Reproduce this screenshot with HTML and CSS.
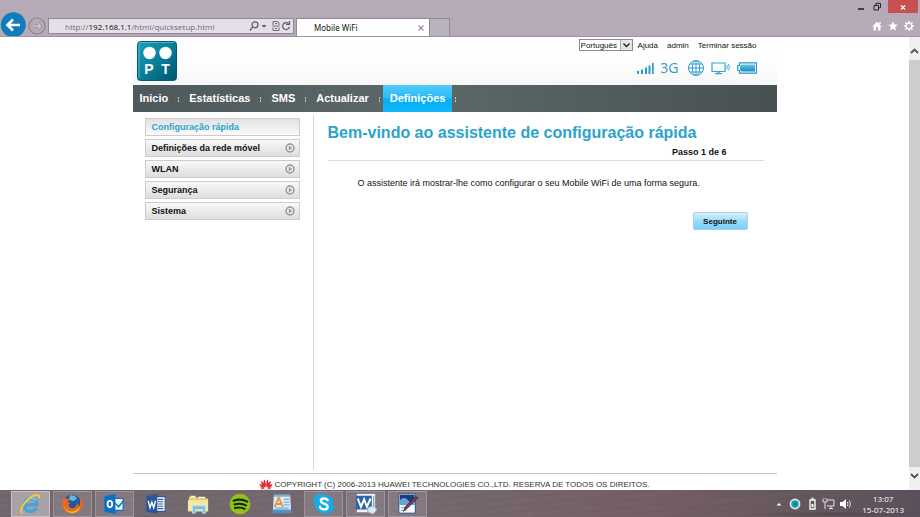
FILE: index.html
```html
<!DOCTYPE html>
<html lang="pt">
<head>
<meta charset="utf-8">
<title>Mobile WiFi</title>
<link rel="stylesheet" href="styles.css">
</head>
<body>
<svg class="symbols" width="0" height="0" aria-hidden="true">
  <symbol id="bullet" viewBox="0 0 10 10"><circle cx="5" cy="5" r="3.900" fill="#eee" stroke="#969696" stroke-width="1.500"/><path d="M3.800 2.600v4.800L7.200 5z" fill="#969696"/></symbol>
</svg>
<header class="chrome">
  <button class="round back" aria-label="Back"><svg viewBox="0 0 26 26"><circle cx="13.300" cy="12.800" r="12.500" fill="#0f7dbd"/><path d="M20 13H8M13 7.500L7.500 13l5.500 5.500" fill="none" stroke="#fff" stroke-width="2.600"/></svg></button>
  <button class="round forward" aria-label="Forward"><svg viewBox="0 0 18 18"><circle cx="9" cy="9" r="8" fill="none" stroke="#8d8190" stroke-width="1.200"/><path d="M4.500 9h8M9.200 5.500L12.700 9l-3.500 3.500" fill="none" stroke="#8d8190" stroke-width="2.600"/><path d="M4.500 9h8M9.200 5.500L12.700 9l-3.500 3.500" fill="none" stroke="#d3cad5" stroke-width="1.300"/></svg></button>
  <div class="address">
    <span class="url">http://<b>192.168.1.1</b>/html/quicksetup.html</span>
    <svg class="address-icons" viewBox="0 0 42 12" fill="none" stroke="#625b65" stroke-width="1.200"><circle cx="6" cy="4.800" r="3"/><path d="M3.800 7L.8 10.500"/><path d="M12.500 5h5L15 7.800z" fill="#625b65" stroke="none"/><path d="M24 5V1.500h4l2 1.500v2M23.500 6h7M24 7.500v3h6v-3M26 3.500h2M26 8.500h2" stroke-width=".9"/><path d="M39.500 3.500A3.500 3.500 0 1 0 40.500 7M40.500 1v3.500H37"/></svg>
  </div>
  <div class="tab"><span>Mobile WiFi</span><button class="tab-close" aria-label="Close tab"><svg viewBox="0 0 8 8"><path d="M1.500 1.500l5 5M6.500 1.500l-5 5" stroke="#969096" stroke-width="1.100"/></svg></button></div>
  <button class="new-tab" aria-label="New tab"></button>
  <div class="window-tools">
    <div class="window-buttons">
      <button aria-label="Minimize"><svg viewBox="0 0 10 10"><path d="M2 7.500h6" stroke="#292229" stroke-width="1.600"/></svg></button>
      <button aria-label="Restore"><svg viewBox="0 0 10 10" fill="none" stroke="#292229"><path d="M2 4h4.500v4.500H2zM4 3.500V1.800h4.500v4.500H7"/></svg></button>
      <button class="window-close" aria-label="Close"><svg viewBox="0 0 10 10"><path d="M3 4l4 4M7 4L3 8" stroke="#fff" stroke-width="1.200"/></svg></button>
    </div>
    <div class="browser-buttons">
      <button aria-label="Home"><svg viewBox="0 0 10 10"><path d="M0.300 5.500L5 .8l4.700 4.700H8.500V9.500H6V6H4v3.500H1.500V5.500zM7.200 1h1.500v2H7.200z" fill="#fff"/></svg></button>
      <button aria-label="Favorites"><svg viewBox="0 0 10 10"><path d="M5 .3l1.400 3.200 3.400.3-2.600 2.300.8 3.500L5 7.700 2 9.600l.8-3.500L.2 3.800l3.400-.3z" fill="#fff"/></svg></button>
      <button aria-label="Tools"><svg viewBox="0 0 10 10" fill="none" stroke="#fff"><circle cx="5" cy="5" r="2.800" stroke-width="1.300"/><path d="M5 0v2M5 8v2M0 5h2M8 5h2M1.500 1.500l1.400 1.400M7.100 7.100l1.400 1.400M8.500 1.500L7.100 2.900M2.900 7.100L1.500 8.500" stroke-width="1.500"/></svg></button>
    </div>
  </div>
</header>

<div class="viewport">
  <div class="page">
    <div class="masthead">
      <svg class="logo" viewBox="0 0 40 40" role="img" aria-label="PT">
        <defs><linearGradient id="teal" x1="0" y1="0" x2="1" y2="1"><stop offset="0" stop-color="#16a0ba"/><stop offset=".5" stop-color="#087f9b"/><stop offset="1" stop-color="#03536d"/></linearGradient></defs>
        <rect x=".5" y=".5" width="39" height="39" rx="3" fill="url(#teal)" stroke="#075c74"/>
        <path d="M2 37V3q0-1.500 1.500-1.500H37" fill="none" stroke="#6bc3d2" stroke-width=".7"/>
        <circle cx="12.500" cy="12" r="6.200" fill="#fff"/><circle cx="28.500" cy="12" r="6.200" fill="#fff"/>
        <text x="12" y="33" class="logo-letter">P</text><text x="28.500" y="33" class="logo-letter">T</text>
      </svg>
      <div class="session">
        <div class="links">
          <span class="language">
            <select aria-label="Idioma"><option>Português</option></select>
            <svg viewBox="0 0 12 10"><path d="M0 0h12v10H0z" fill="#e4e4e4"/><path d="M.5 0v10" stroke="#aaa"/><path d="M3.500 3.500l3 3 3-3" fill="none" stroke="#222" stroke-width="1.400"/></svg>
          </span>
          <a href="#">Ajuda</a><a href="#">admin</a><a href="#">Terminar sessão</a>
        </div>
        <div class="status">
          <svg class="signal" viewBox="0 0 18 14" fill="#2b9bcb"><path d="M1 10h2v3H1zM5 8.500h2V13H5zM9 6.500h2V13H9zM12.500 4.500h2V13h-2zM16 2h1.700v11H16z"/></svg>
          <span class="network">3G</span>
          <svg class="globe" viewBox="0 0 18 18" fill="none" stroke="#2d9fcf"><circle cx="9" cy="9" r="7.500"/><ellipse cx="9" cy="9" rx="3.700" ry="7.500"/><path d="M9 1.500v15M1.500 9h15M3 5h12M3 13h12"/></svg>
          <svg class="monitor" viewBox="0 0 20 14" fill="none" stroke="#3ba3d0"><path d="M1 2h13v8.500H1zM4 12.700h7" stroke-width="1.200"/><path d="M7.500 10.500v2" stroke-width="2"/><path d="M15.800 4q1 2 0 4.500M17.500 3q1.800 3 0 6.500" stroke-width=".9"/></svg>
          <svg class="battery" viewBox="0 0 20 12"><defs><linearGradient id="cell" x2="0" y2="1"><stop stop-color="#6dc7e6"/><stop offset="1" stop-color="#168bc1"/></linearGradient></defs><path d="M2.500 .8h17v10.400h-17V8.500H.7v-5h1.800z" fill="#fff" stroke="#2595c6" stroke-width="1.200"/><path d="M4.500 2.500h13.500v7H4.500L3 8V4z" fill="url(#cell)"/></svg>
        </div>
      </div>
    </div>
    <nav class="menu">
      <ul>
        <li><a href="#">Inicio</a></li><li><a href="#">Estatísticas</a></li><li><a href="#">SMS</a></li><li><a href="#">Actualizar</a></li><li><a href="#" class="active">Definições</a></li>
      </ul>
    </nav>
    <div class="columns">
      <aside class="sidebar">
        <a href="#" class="current">Configuração rápida</a>
        <a href="#">Definições da rede móvel<svg><use href="#bullet"/></svg></a>
        <a href="#">WLAN<svg><use href="#bullet"/></svg></a>
        <a href="#">Segurança<svg><use href="#bullet"/></svg></a>
        <a href="#">Sistema<svg><use href="#bullet"/></svg></a>
      </aside>
      <main>
        <h1>Bem-vindo ao assistente de configuração rápida</h1>
        <p class="step">Passo 1 de 6</p>
        <p class="intro">O assistente irá mostrar-lhe como configurar o seu Mobile WiFi de uma forma segura.</p>
        <button class="next">Seguinte</button>
      </main>
    </div>
    <footer class="copyright">
      <svg viewBox="0 0 14 12"><g fill="#df2432"><path d="M6.700 8.500Q3.500 4 5.200.5q2 1.500 1.500 8zM7.300 8.500Q10.500 4 8.800.5q-2 1.500-1.500 8zM6.200 8.800Q1.500 5.500 2.300 2q3 1.500 3.900 6.800zM7.800 8.800q4.700-3.300 3.900-6.800-3 1.500-3.900 6.800zM5.700 9.200Q.5 8 .5 4.800q3.300 1 5.200 4.400zM8.300 9.200q5.200-1.200 5.200-4.400-3.300 1-5.200 4.400zM5.500 9.700Q2.500 10.700 1 8.200q2.500-.2 4.500 1.500zM8.500 9.700q3 1 4.500-1.500-2.500-.2-4.500 1.500z"/></g><path d="M1.500 11.300h11" stroke="#4d4648" stroke-width="1.200" stroke-dasharray="1.300 .5"/></svg>
      <span>COPYRIGHT (C) 2006-2013 HUAWEI TECHNOLOGIES CO.,LTD. RESERVA DE TODOS OS DIREITOS.</span>
    </footer>
  </div>
  <div class="scrollbar">
    <svg viewBox="0 0 11 23"><path d="M2 16l3.500-3.500L9 16" fill="none" stroke="#505050" stroke-width="1.800"/></svg>
    <div class="thumb"></div>
    <svg viewBox="0 0 11 23"><path d="M2 7l3.500 3.500L9 7" fill="none" stroke="#505050" stroke-width="1.800"/></svg>
  </div>
</div>

<footer class="taskbar">
  <div class="apps">
    <button class="open focused" aria-label="Internet Explorer"><svg viewBox="0 0 24 24"><path d="M6 13h13.500q.3-7.200-6.700-7.200T5.800 13q0 7 7 7 4.500 0 6-3.500" fill="none" stroke="#3fa5da" stroke-width="3.500"/><path d="M7 9.500q2-4 6.500-4 3 0 5 2.500" fill="none" stroke="#a6def5" stroke-width="1.200"/><path d="M4 21.500C-1.500 21 7 6 17 2.500c4.500-1.500 5.500.5 4.500 3" fill="none" stroke="#f5cc35" stroke-width="2"/></svg></button>
    <button class="open" aria-label="Firefox"><svg viewBox="0 0 24 24"><circle cx="12" cy="11.500" r="9.700" fill="#235996"/><path d="M10 2.500q5-.5 7.500 3.500l-4 3-5-2z" fill="#69b7dc"/><path d="M3 4q1 2 3 2l4 1q-3 1-3 3l3 1-2 2q2 5 7 3 3-2 2-6 3 3 1.500 6 4-4 2-11 6 6 2 12.500-4 6-11 4.500Q.5 20 1.500 10 1.500 6 3 4z" fill="#e66b20"/><path d="M2.500 14q4 8 12 5.500 5-1.500 6.500-6-1 8-9 8.500-7 0-9.500-8z" fill="#f7b336"/></svg></button>
    <button class="open" aria-label="Outlook"><svg viewBox="0 0 24 24"><path d="M12 6h10v13H12z" fill="#e9f4fc" stroke="#0e70be" stroke-width="1.300"/><path d="M13 11l4 4 5-6" fill="none" stroke="#0e70be" stroke-width="1.500"/><path d="M1.500 3.500L13.500 1v22l-12-2.500z" fill="#0871c4"/><ellipse cx="7.500" cy="12" rx="2.500" ry="3.500" fill="none" stroke="#fff" stroke-width="2"/></svg></button>
    <button aria-label="Word"><svg viewBox="0 0 24 24"><path d="M12 4h10v16H12z" fill="#fff" stroke="#2d5797" stroke-width="1.200"/><path d="M14 7h6M14 9.500h6M14 12h6M14 14.500h6M14 17h6" stroke="#2d5797" stroke-width="1.200"/><path d="M1.500 3.500L13.500 1v22l-12-2.500z" fill="#285698"/><path d="M3.500 8.500L5.500 16l2-6 2 6 2-7.500" fill="none" stroke="#fff" stroke-width="1.500"/></svg></button>
    <button aria-label="Explorer"><svg viewBox="0 0 24 24"><path d="M2 4h8l2 2h11v14H2z" fill="#e9d17b"/><path d="M4 3h5v2H4zM12 4h8v2h-8z" fill="#fff8cf"/><path d="M1 8h22v12H1z" fill="#f5e6a2"/><path d="M6 22v-8h14v8h-3v-4H9v4z" fill="#78bfdf" stroke="#b6e4f2"/></svg></button>
    <button aria-label="Spotify"><svg viewBox="0 0 24 24"><circle cx="12" cy="12" r="11.300" fill="#8fc412"/><path d="M5 8.500q8-3 15 1M6 12.500q7-2 12.500 1M6.500 16.300q6-1.500 10.500 1" fill="none" stroke="#1c2513" stroke-width="2.200" stroke-linecap="round"/></svg></button>
    <button aria-label="WordPad"><svg viewBox="0 0 24 24"><path d="M3 3h18l1 18H2z" fill="#d6eafa"/><path d="M3 1.500h18V4H3z" fill="#72aeda"/><path d="M2 18h20v4H2z" fill="#4c91ca"/><path d="M4 15.500L8.500 5 13 15.500M5.500 12h6" fill="none" stroke="#e8933f" stroke-width="2"/><path d="M14 7h6M14 10h6M14 13h6M5 16.500h14" stroke="#82abc9" stroke-width="1.300"/></svg></button>
    <button class="open" aria-label="Skype"><svg viewBox="0 0 24 24"><path d="M7 1q4 0 5 1 10 0 10 10 2 4-1 8-3 4-8 2Q3 22 2 13-.5 8 1 4.500 3 1 7 1z" fill="#18aae6"/><path d="M16 8q-1-2-4-2-3.500 0-3.500 2.500 0 2 3.500 3 4 1 4 3.500 0 3-4 3-3.500 0-4.500-3" fill="none" stroke="#fff" stroke-width="2.500" stroke-linecap="round"/></svg></button>
    <button class="open" aria-label="Documento Word"><svg viewBox="0 0 24 24"><path d="M2 1h20v20H2z" fill="#f0f5fb"/><path d="M1 3h17v15H1z" fill="#2d63ab"/><path d="M3 6l3.500 9L10 7l3 8 4-9" fill="none" stroke="#fff" stroke-width="2.200"/><path d="M18 3v12M20.500 3v12" stroke="#5686bf"/><path d="M14 16l6-2 4 4-4 5-6-2z" fill="#dceaf4" stroke="#8caccc"/></svg></button>
    <button class="open" aria-label="Journal"><svg viewBox="0 0 24 24"><path d="M2 1h18v21H2z" fill="#f5faff" stroke="#284d73"/><path d="M3 2h16v11H3z" fill="#173d80"/><path d="M3 8q5-5 9 0t7-2v7H3z" fill="#64a4da"/><path d="M4 16h8M4 19h6" stroke="#749bc3"/><path d="M23 5L11 17l-4 3 2-5L20 4z" fill="#803b43" stroke="#332b3a" stroke-width=".8"/></svg></button>
  </div>
  <div class="tray">
    <svg viewBox="0 0 16 16"><path d="M5.500 9.500L8 7l2.500 2.500z" fill="#fff"/></svg>
    <svg viewBox="0 0 16 16"><circle cx="8" cy="8" r="5.400" fill="#dbe7e8"/><circle cx="8" cy="8" r="3.700" fill="#18a4ab"/><circle cx="8" cy="8" r="1.700" fill="#087680"/></svg>
    <svg class="wide" viewBox="0 0 16 16"><path d="M6 4h5v9H6zM7.500 2.500h2" fill="none" stroke="#fff" stroke-width="1.300"/><path d="M7.500 8h2v3h-2z" fill="#fff"/></svg>
    <svg viewBox="0 0 16 16" fill="none" stroke="#e6e0e4"><path d="M6 4h7v6H6M8 12.500h4M10 10v2.500M2 3v3h4V3M4 6v7M3 2v1M5 2v1"/></svg>
    <svg viewBox="0 0 16 16"><path d="M3 6h2.500L9 3v10l-3.500-3H3z" fill="#fff"/><path d="M10.500 6q1 2 0 4M12.500 4.500q2 3.500 0 7" fill="none" stroke="#e3dbe0"/></svg>
    <div class="clock"><span>13:07</span><span>15-07-2013</span></div>
  </div>
</footer>
</body>
</html>
```
FILE: styles.css
```css
* { box-sizing: border-box; }

body {
  margin: 0;
  height: 100vh;
  display: flex;
  flex-direction: column;
  overflow: hidden;
  background: #fff;
  color: #111;
  font-family: "Liberation Sans", Arial, sans-serif;
  font-size: 9px;
}

button { padding: 0; border: 0; background: none; font: inherit; }
a { color: inherit; text-decoration: none; }
svg { display: block; flex-shrink: 0; }
.symbols { position: absolute; }

/* Browser frame */
.chrome {
  display: flex;
  align-items: flex-end;
  height: 37px;
  flex-shrink: 0;
  background: #b6aab8;
  border-bottom: 1px solid #a094a3;
}
.round { flex-shrink: 0; }
.back { width: 26px; height: 24px; overflow: hidden; }
.back svg { width: 26px; height: 26px; }
.forward { width: 18px; height: 18px; margin: 0 2px 1px; }
.address {
  display: flex;
  align-items: center;
  justify-content: space-between;
  width: 246px;
  height: 16px;
  margin-bottom: 2px;
  padding: 0 2px 0 16px;
  background: #e5dfe7;
  border: 1px solid #93889a;
  font: 8px "Open Sans", sans-serif;
  color: #726b75;
}
.address b { font-weight: 400; color: #111; }
.address-icons { width: 42px; height: 12px; }
.tab {
  display: flex;
  align-items: center;
  justify-content: space-between;
  width: 134px;
  height: 18px;
  margin-left: 2px;
  padding: 0 4px 0 17px;
  background: #fff;
  border: 1px solid #93889a;
  border-bottom: 0;
  font: 8px "Noto Sans", sans-serif;
}
.tab-close svg { width: 8px; height: 8px; }
.new-tab {
  width: 20px;
  height: 18px;
  background: #b9b4bb;
  border: 1px solid #93889a;
  border-width: 1px 1px 0 0;
}
.window-tools { margin-left: auto; height: 100%; }
.window-buttons { display: flex; justify-content: flex-end; height: 13px; padding-right: 2px; gap: 6px; }
.window-buttons svg { width: 10px; height: 11px; margin: 0 auto; }
.window-close { width: 30px; background: #c75050; }
.browser-buttons { display: flex; justify-content: flex-end; gap: 6px; padding: 8px 6px 0 0; }
.browser-buttons svg { width: 10px; height: 10px; }

/* Scrollable page area */
.viewport { display: flex; flex: 1; min-height: 0; }
.page { display: flex; flex-direction: column; flex: 0 1 644px; margin: 0 auto; }
.scrollbar { display: flex; flex-direction: column; width: 11px; background: #f0f0f0; }
.scrollbar svg { width: 11px; height: 23px; }
.thumb { flex: 1; background: #cdcdcd; }

.masthead {
  display: flex;
  justify-content: space-between;
  height: 48px;
  padding: 4px 20px 0 4px;
  background: linear-gradient(#fff, #fdfdfd 60%, #f6f6f6);
}
.logo { width: 40px; height: 40px; }
.logo-letter { fill: #fff; font-size: 14px; font-weight: 700; text-anchor: middle; }
.session { display: flex; flex-direction: column; align-items: flex-end; margin-top: -2px; }
.links { display: flex; align-items: center; font-size: 8px; gap: 9px; }
.language { position: relative; margin-right: -4px; }
.language select {
  display: block;
  appearance: none;
  width: 54px;
  height: 12px;
  padding: 0 0 0 1px;
  border: 1px solid #8b8b8b;
  border-radius: 0;
  background: #fff;
  color: #111;
  font: inherit;
}
.language svg { position: absolute; top: 1px; right: 1px; width: 12px; height: 10px; pointer-events: none; }
.status { display: flex; align-items: center; gap: 8px; height: 18px; margin-top: 8px; }
.signal { width: 18px; height: 14px; }
.network { color: #3799c6; font: 14px/18px "Open Sans", sans-serif; margin-left: -2px; }
.globe { width: 18px; height: 18px; }
.monitor { width: 20px; height: 14px; margin-left: -2px; }
.battery { width: 20px; height: 12px; margin-left: -2px; }

.menu {
  height: 27px;
  background: linear-gradient(90deg, #4d595a, #5d6869 45%, #475152);
  color: #fff;
  font-size: 11px;
  font-weight: 700;
  line-height: 26px;
}
.menu ul { display: flex; margin: 0; padding: 0; list-style: none; }
.menu li { display: flex; align-items: center; }
.menu li::after {
  content: "";
  width: 1px;
  height: 5px;
  margin: 1px 3px 0;
  background: linear-gradient(#c3caca 2px, transparent 2px 3px, #c3caca 3px);
}
.menu a { height: 27px; padding: 0 7px; }
.menu .active { background: linear-gradient(#53c9fb, #2dbcf8 45%, #04aef5 55%, #12b8fa); }

.columns { display: flex; flex: 1; padding: 3px 0; }
.sidebar {
  display: flex;
  flex-direction: column;
  gap: 3px;
  width: 181px;
  flex-shrink: 0;
  padding: 3px 13px 0 12px;
  border-right: 1px solid #d5d5d5;
}
.sidebar a {
  display: flex;
  align-items: center;
  justify-content: space-between;
  height: 18px;
  padding: 0 4px 0 6px;
  border: 1px solid #ccc;
  background: linear-gradient(#f8f8f8, #dedede);
  font-weight: 700;
}
.sidebar a svg { width: 10px; height: 10px; }
.sidebar .current { color: #2ba3cc; background: linear-gradient(#e2e2e2, #fafafa); }
main { flex: 1; padding: 8px 13px 0 14px; }
h1 { margin: 0; color: #2ba3cc; font-size: 16px; line-height: 20px; }
.step {
  margin: 0;
  padding: 1px 37px 0 0;
  border-bottom: 1px solid #ddd;
  font-weight: 700;
  line-height: 16px;
  text-align: right;
}
.intro { margin: 15px 0 0 30px; line-height: 14px; }
.next {
  display: block;
  width: 55px;
  height: 18px;
  margin: 22px 16px 0 auto;
  border: 1px solid #a5cfe4;
  border-radius: 2px;
  background: linear-gradient(#d8f0fc, #9bdbfa 50%, #78d0fb);
  color: #111;
  font-size: 8px;
  font-weight: 700;
}
.copyright {
  display: flex;
  align-items: center;
  justify-content: center;
  gap: 1px;
  height: 17px;
  padding-top: 5px;
  border-top: 1px solid #c4c4c4;
  color: #333;
  font-size: 8px;
}
.copyright svg { width: 14px; height: 12px; }

/* Desktop taskbar */
.taskbar {
  display: flex;
  justify-content: space-between;
  height: 27px;
  flex-shrink: 0;
  padding: 1px 16px 0 11px;
  background:
    radial-gradient(ellipse at 91% 90%, #57474b 0, transparent 8%),
    radial-gradient(ellipse at 72% 40%, #755d61 0, transparent 15%),
    repeating-linear-gradient(174deg, transparent 0 5px, rgba(80, 58, 66, .08) 5px 7px),
    linear-gradient(90deg, #73686f, #756970 45%, #765f66 70%, #65575e 88%, #5a515c);
  color: #fff;
}
.apps { display: grid; grid-template-columns: repeat(10, 1fr); gap: 3px; flex: 0 1 416px; }
.apps button { display: flex; align-items: center; justify-content: center; border: 1px solid transparent; }
.apps .open { border-color: #9d949b; background: rgba(190, 182, 190, .22); }
.apps .focused { border-color: #c8c1c6; background: #aaa1a7; }
.apps svg { width: 22px; height: 22px; }
.tray { display: flex; align-items: center; }
.tray svg { width: 16px; height: 16px; }
.tray .wide { width: 18px; }
.clock {
  display: flex;
  flex-direction: column;
  align-items: center;
  margin-left: 9px;
  font: 8px/11px "Open Sans", sans-serif;
}
```
